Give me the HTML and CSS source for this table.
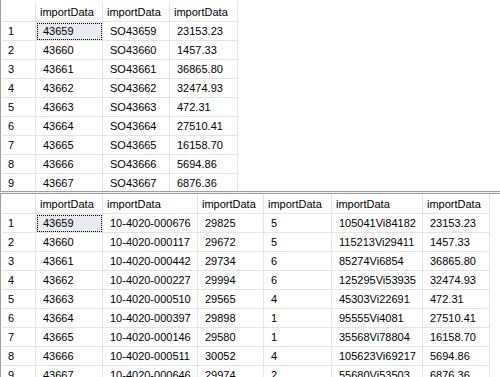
FILE: index.html
```html
<!DOCTYPE html>
<html>
<head>
<meta charset="utf-8">
<link rel="stylesheet" href="styles.css">
</head>
<body>
<div class="results">
  <div class="pane pane-top">
    <table class="grid">
      <colgroup>
        <col class="c-num"><col class="c67"><col class="c67"><col class="c68">
      </colgroup>
      <thead>
        <tr><th></th><th>importData</th><th>importData</th><th>importData</th></tr>
      </thead>
      <tbody>
        <tr><td class="num">1</td><td class="sel">43659</td><td>SO43659</td><td>23153.23</td></tr>
        <tr><td class="num">2</td><td>43660</td><td>SO43660</td><td>1457.33</td></tr>
        <tr><td class="num">3</td><td>43661</td><td>SO43661</td><td>36865.80</td></tr>
        <tr><td class="num">4</td><td>43662</td><td>SO43662</td><td>32474.93</td></tr>
        <tr><td class="num">5</td><td>43663</td><td>SO43663</td><td>472.31</td></tr>
        <tr><td class="num">6</td><td>43664</td><td>SO43664</td><td>27510.41</td></tr>
        <tr><td class="num">7</td><td>43665</td><td>SO43665</td><td>16158.70</td></tr>
        <tr><td class="num">8</td><td>43666</td><td>SO43666</td><td>5694.86</td></tr>
        <tr><td class="num">9</td><td>43667</td><td>SO43667</td><td>6876.36</td></tr>
      </tbody>
    </table>
  </div>
  <div class="splitter"></div>
  <div class="pane pane-bottom">
    <table class="grid">
      <colgroup>
        <col class="c-num"><col class="c67"><col class="c95"><col class="c66"><col class="c68"><col class="c91"><col class="c67">
      </colgroup>
      <thead>
        <tr><th></th><th>importData</th><th>importData</th><th>importData</th><th>importData</th><th>importData</th><th>importData</th></tr>
      </thead>
      <tbody>
        <tr><td class="num">1</td><td class="sel">43659</td><td>10-4020-000676</td><td>29825</td><td>5</td><td>105041Vi84182</td><td>23153.23</td></tr>
        <tr><td class="num">2</td><td>43660</td><td>10-4020-000117</td><td>29672</td><td>5</td><td>115213Vi29411</td><td>1457.33</td></tr>
        <tr><td class="num">3</td><td>43661</td><td>10-4020-000442</td><td>29734</td><td>6</td><td>85274Vi6854</td><td>36865.80</td></tr>
        <tr><td class="num">4</td><td>43662</td><td>10-4020-000227</td><td>29994</td><td>6</td><td>125295Vi53935</td><td>32474.93</td></tr>
        <tr><td class="num">5</td><td>43663</td><td>10-4020-000510</td><td>29565</td><td>4</td><td>45303Vi22691</td><td>472.31</td></tr>
        <tr><td class="num">6</td><td>43664</td><td>10-4020-000397</td><td>29898</td><td>1</td><td>95555Vi4081</td><td>27510.41</td></tr>
        <tr><td class="num">7</td><td>43665</td><td>10-4020-000146</td><td>29580</td><td>1</td><td>35568Vi78804</td><td>16158.70</td></tr>
        <tr><td class="num">8</td><td>43666</td><td>10-4020-000511</td><td>30052</td><td>4</td><td>105623Vi69217</td><td>5694.86</td></tr>
        <tr><td class="num">9</td><td>43667</td><td>10-4020-000646</td><td>29974</td><td>2</td><td>55680Vi53503</td><td>6876.36</td></tr>
      </tbody>
    </table>
  </div>
</div>
</body>
</html>
```
FILE: styles.css
```css
html, body {
  margin: 0;
  padding: 0;
  background: #ffffff;
}
body {
  width: 500px;
  height: 377px;
  overflow: hidden;
  font-family: "Liberation Sans", Arial, sans-serif;
  font-size: 11px;
  color: #000000;
}
.results {
  display: flex;
  flex-direction: column;
  height: 377px;
}
.pane {
  overflow: hidden;
  border-left: 1px solid #a0a0a0;
  margin-left: 0;
  padding-left: 1px;
}
.pane-top {
  height: 191px;
  flex: none;
  padding-top: 2px;
  box-sizing: border-box;
}
.pane-bottom {
  flex: 1;
}
.splitter {
  flex: none;
  height: 1px;
  border-top: 1px solid #a0a0a0;
  border-bottom: 1px solid #a0a0a0;
  background: #f0f0f0;
}
.grid {
  border-collapse: separate;
  border-spacing: 0;
  table-layout: fixed;
}
.c-num { width: 34px; }
.c66 { width: 66px; }
.c67 { width: 67px; }
.c68 { width: 68px; }
.c91 { width: 91px; }
.c95 { width: 95px; }
.grid th,
.grid td {
  box-sizing: border-box;
  border-right: 1px solid #e4e4e4;
  border-bottom: 1px solid #e4e4e4;
  white-space: nowrap;
  overflow: hidden;
  text-align: left;
  font-weight: normal;
  padding: 0;
}
.grid th {
  height: 20px;
  padding-left: 4px;
  padding-top: 1px;
}
.grid td {
  height: 19px;
  padding-left: 7px;
}
.grid td.num {
  padding-left: 6px;
}
.grid td.sel {
  background: #e8ecf0;
  outline: 1px dotted #000000;
  outline-offset: -2px;
}
```
